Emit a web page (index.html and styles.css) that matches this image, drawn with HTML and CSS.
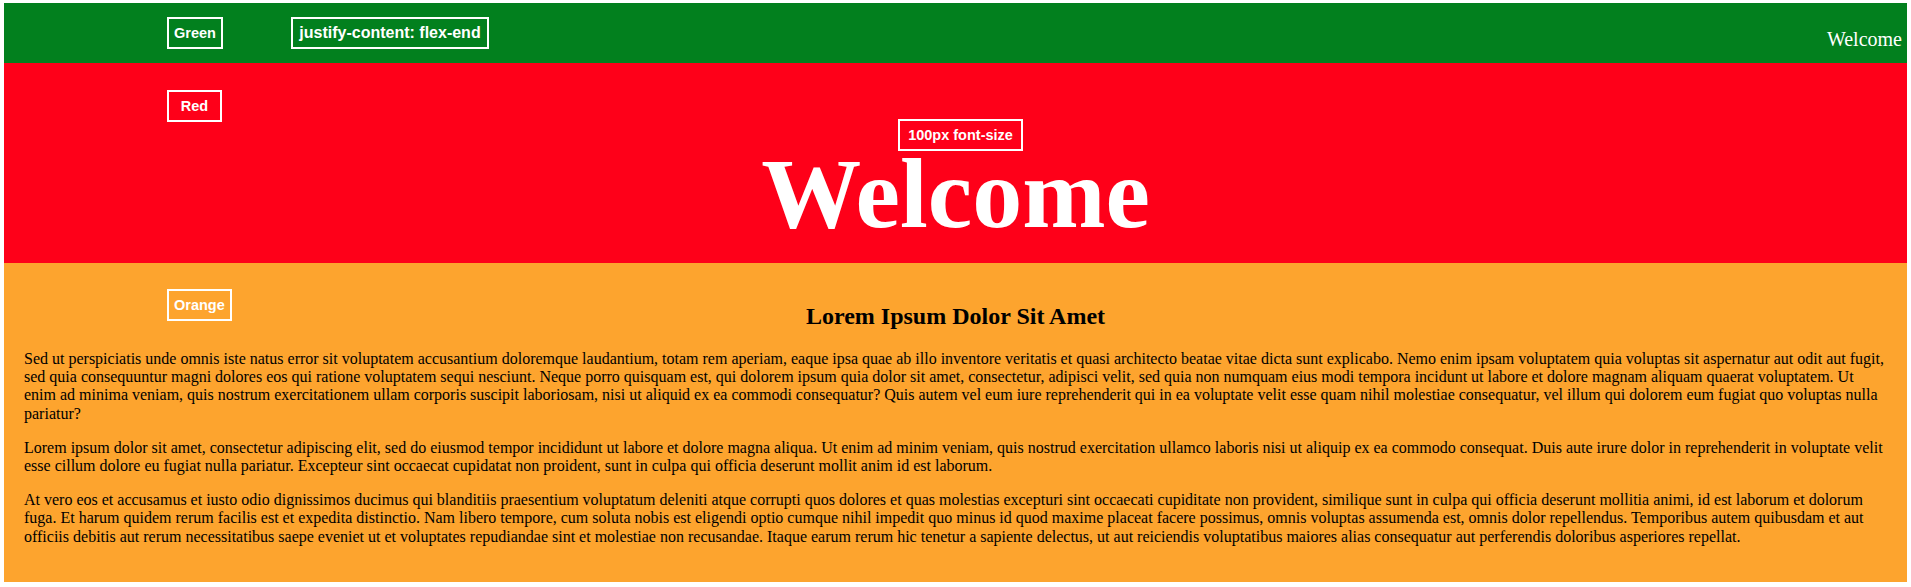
FILE: index.html
```html
<!DOCTYPE html>
<html lang="en">
<head>
<meta charset="utf-8">
<title>Welcome</title>
<link rel="stylesheet" href="styles.css">
</head>
<body>
<div class="page">
  <header class="band band-green">
    <span class="tag tag-green">Green</span>
    <span class="tag tag-justify">justify-content: flex-end</span>
    <span class="small-welcome">Welcome</span>
  </header>
  <section class="band band-red">
    <span class="tag tag-red">Red</span>
    <span class="tag tag-size">100px font-size</span>
    <h1 class="big-welcome">Welcome</h1>
  </section>
  <main class="band band-orange">
    <span class="tag tag-orange">Orange</span>
    <h2 class="title">Lorem Ipsum Dolor Sit Amet</h2>
    <p>Sed ut perspiciatis unde omnis iste natus error sit voluptatem accusantium doloremque laudantium, totam rem aperiam, eaque ipsa quae ab illo inventore veritatis et quasi architecto beatae vitae dicta sunt explicabo. Nemo enim ipsam voluptatem quia voluptas sit aspernatur aut odit aut fugit, sed quia consequuntur magni dolores eos qui ratione voluptatem sequi nesciunt. Neque porro quisquam est, qui dolorem ipsum quia dolor sit amet, consectetur, adipisci velit, sed quia non numquam eius modi tempora incidunt ut labore et dolore magnam aliquam quaerat voluptatem. Ut enim ad minima veniam, quis nostrum exercitationem ullam corporis suscipit laboriosam, nisi ut aliquid ex ea commodi consequatur? Quis autem vel eum iure reprehenderit qui in ea voluptate velit esse quam nihil molestiae consequatur, vel illum qui dolorem eum fugiat quo voluptas nulla pariatur?</p>
    <p>Lorem ipsum dolor sit amet, consectetur adipiscing elit, sed do eiusmod tempor incididunt ut labore et dolore magna aliqua. Ut enim ad minim veniam, quis nostrud exercitation ullamco laboris nisi ut aliquip ex ea commodo consequat. Duis aute irure dolor in reprehenderit in voluptate velit esse cillum dolore eu fugiat nulla pariatur. Excepteur sint occaecat cupidatat non proident, sunt in culpa qui officia deserunt mollit anim id est laborum.</p>
    <p>At vero eos et accusamus et iusto odio dignissimos ducimus qui blanditiis praesentium voluptatum deleniti atque corrupti quos dolores et quas molestias excepturi sint occaecati cupiditate non provident, similique sunt in culpa qui officia deserunt mollitia animi, id est laborum et dolorum fuga. Et harum quidem rerum facilis est et expedita distinctio. Nam libero tempore, cum soluta nobis est eligendi optio cumque nihil impedit quo minus id quod maxime placeat facere possimus, omnis voluptas assumenda est, omnis dolor repellendus. Temporibus autem quibusdam et aut officiis debitis aut rerum necessitatibus saepe eveniet ut et voluptates repudiandae sint et molestiae non recusandae. Itaque earum rerum hic tenetur a sapiente delectus, ut aut reiciendis voluptatibus maiores alias consequatur aut perferendis doloribus asperiores repellat.</p>
  </main>
</div>
</body>
</html>
```

FILE: styles.css
```css
html, body {
  background: #ffffff;
}

body {
  margin: 3px 4px;
  font-family: "Liberation Serif", "Times New Roman", serif;
  color: #000;
}

.page {
  display: flex;
  flex-direction: column;
}

.band {
  position: relative;
  box-sizing: border-box;
}

.band-green {
  height: 60px;
  background: #02801e;
  display: flex;
  justify-content: flex-end;
  align-items: flex-end;
  padding: 0 5px 12px 0;
}

.small-welcome {
  color: #fff;
  font-size: 20px;
  line-height: normal;
}

.band-red {
  height: 200px;
  background: #fe0019;
  display: flex;
  justify-content: center;
  align-items: flex-end;
  padding-bottom: 12px;
}

.big-welcome {
  margin: 0;
  color: #fff;
  font-size: 100px;
  font-weight: bold;
  line-height: normal;
}

.band-orange {
  display: block;
  background: #fda42e;
  padding: 20px;
}

.title {
  margin: 20px 0;
  text-align: center;
  font-size: 24px;
  font-weight: bold;
  line-height: normal;
}

.band-orange p {
  margin: 16px 0;
  font-size: 16px;
  line-height: 18.2px;
}

.tag {
  position: absolute;
  box-sizing: border-box;
  min-width: 55px;
  padding: 6px 5px;
  border: 2px solid #fff;
  color: #fff;
  font-family: "Liberation Sans", Arial, sans-serif;
  font-weight: bold;
  font-size: 14.5px;
  line-height: 16px;
  text-align: center;
  white-space: nowrap;
}

.tag-green { left: 163px; top: 14px; }
.tag-justify { left: 287px; top: 14px; width: 198px; font-size: 16px; padding: 6px 2px; }
.tag-red { left: 163px; top: 27px; }
.tag-size { left: 894px; top: 56px; width: 125px; }
.tag-orange { left: 163px; top: 26px; }
```
